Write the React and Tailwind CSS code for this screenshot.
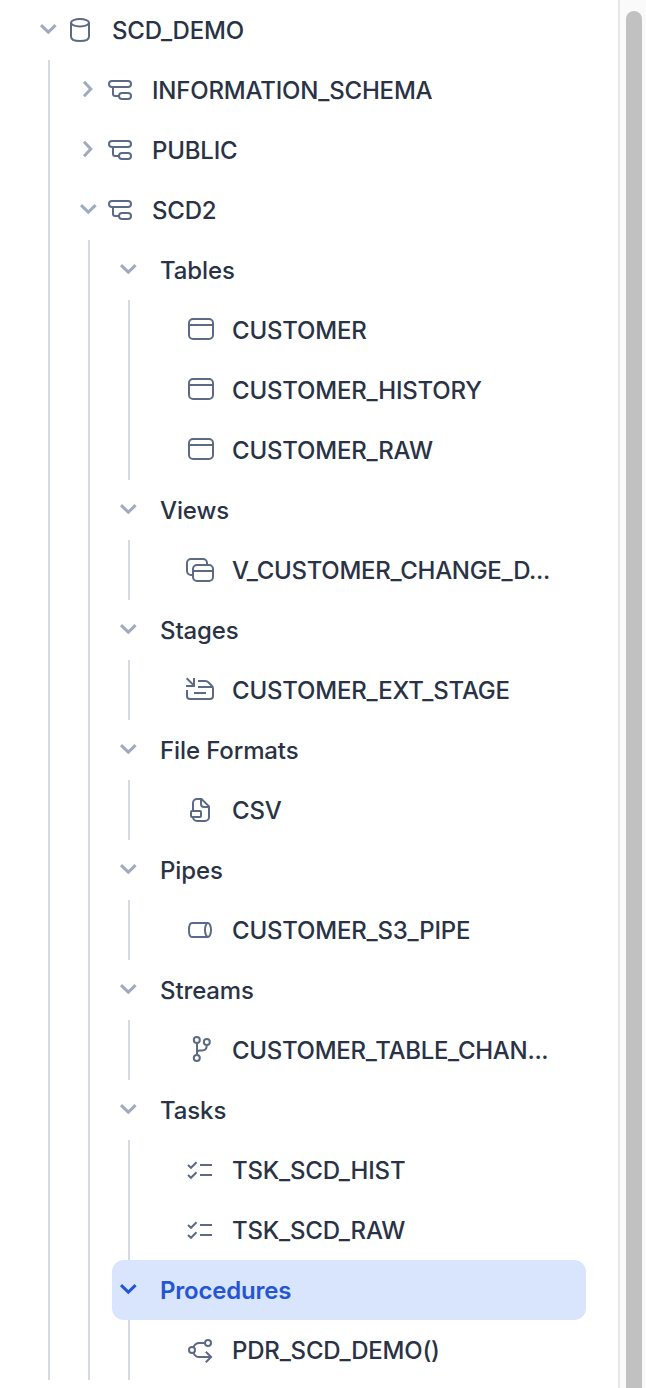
import React from 'react';

const icons = {
  database: (
    <>
      <ellipse cx="16" cy="8.7" rx="9" ry="3.7" />
      <path d="M7 8.7V22.5C7 25.4 10.5 27 16 27S25 25.4 25 22.5V8.7" />
    </>
  ),
  schema: (
    <>
      <rect x="5" y="7" width="22" height="6" rx="3" />
      <rect x="15" y="19" width="12" height="6" rx="3" />
      <path d="M9 13v7a2 2 0 0 0 2 2h4" />
    </>
  ),
  table: (
    <>
      <rect x="5" y="5" width="24" height="20" rx="4" />
      <path d="M5 11h24" />
    </>
  ),
  view: (
    <>
      <rect x="9" y="11" width="20" height="16" rx="4" />
      <path d="M9 17h20M9 21H7a4 4 0 0 1-4-4V9a4 4 0 0 1 4-4h12a4 4 0 0 1 4 4v2" />
    </>
  ),
  stage: (
    <path d="M2.7 4.3L10 11.6M10 4v8H2M14 7h7.5a4 4 0 0 1 2.8 1.2l3.5 3.5a4 4 0 0 1 1.2 2.8V22a3 3 0 0 1-3 3H6a3 3 0 0 1-3-3v-6M14 13h14.5M10 19h12" />
  ),
  file: (
    <>
      <path d="M9 17V9a4 4 0 0 1 4-4h4.5L25 12.3V23a4 4 0 0 1-4 4h-8a4 4 0 0 1-4-4M17 5v5a3 3 0 0 0 3 3h5" />
      <rect x="7" y="17" width="10" height="6" rx="1" />
    </>
  ),
  pipe: (
    <>
      <ellipse cx="24" cy="16" rx="3" ry="7" />
      <path d="M24 9H8C6 9 5 12 5 16s1 7 3 7h16" />
    </>
  ),
  stream: (
    <>
      <circle cx="12.8" cy="6" r="3" />
      <circle cx="22.8" cy="8" r="3" />
      <circle cx="12.8" cy="24" r="3" />
      <path d="M13 9v12M13 18.5c0-1.5 1-2 2.5-2H18c3 0 4.8-2 4.8-5.5" />
    </>
  ),
  task: (
    <path d="M4 11l3 2.8 5.5-5.5M4 21l3 2.8 5.5-5.5M16 11h12M16 21h12" />
  ),
  procedure: (
    <>
      <circle cx="24" cy="9" r="3" />
      <circle cx="8" cy="16" r="3" />
      <path d="M21 9h-6c-3 0-4.5 1.8-5.6 4.2M9.4 18.8C10.5 21.2 12 23 15 23h12.5M21.8 17.8l5.3 5.2-5.3 5.2" />
    </>
  ),
};

function Icon({ name }) {
  return (
    <svg viewBox="0 0 32 32" fill="none" stroke="currentColor" strokeWidth="2" className="size-8 shrink-0 text-[#5d6a85]">
      {icons[name]}
    </svg>
  );
}

function Chevron({ open, active }) {
  return (
    <svg
      viewBox="0 0 32 32"
      fill="none"
      stroke="currentColor"
      strokeWidth="3"
      className={active ? 'size-8 shrink-0 text-[#2456d3]' : 'size-8 shrink-0 text-[#a0abc0]'}
    >
      <path d={open ? 'M9 11.2l7.3 7 7.3-7' : 'M12 7.8l6.8 7.2-6.8 7.2'} />
    </svg>
  );
}

function Label({ children }) {
  return <span className="ml-4 truncate pt-0.5">{children}</span>;
}

const groups = [
  { name: 'Tables', icon: 'table', items: ['CUSTOMER', 'CUSTOMER_HISTORY', 'CUSTOMER_RAW'] },
  { name: 'Views', icon: 'view', items: ['V_CUSTOMER_CHANGE_D...'] },
  { name: 'Stages', icon: 'stage', items: ['CUSTOMER_EXT_STAGE'] },
  { name: 'File Formats', icon: 'file', items: ['CSV'] },
  { name: 'Pipes', icon: 'pipe', items: ['CUSTOMER_S3_PIPE'] },
  { name: 'Streams', icon: 'stream', items: ['CUSTOMER_TABLE_CHAN...'] },
  { name: 'Tasks', icon: 'task', items: ['TSK_SCD_HIST', 'TSK_SCD_RAW'] },
  { name: 'Procedures', icon: 'procedure', items: ['PDR_SCD_DEMO()'], active: true },
];

function SchemaRow({ name, open }) {
  return (
    <div className="flex h-15 items-center pl-[22px]">
      <Chevron open={open} />
      <Icon name="schema" />
      <Label>{name}</Label>
    </div>
  );
}

function Group({ group }) {
  return (
    <div>
      <div
        className={
          group.active
            ? 'ml-[22px] flex h-15 items-center rounded-xl bg-[#d9e5fd] font-semibold tracking-[-0.2px] text-[#2456d3]'
            : 'ml-[22px] flex h-15 items-center tracking-[-0.12px]'
        }
      >
        <Chevron open active={group.active} />
        <Label>{group.name}</Label>
      </div>
      <div className="ml-[38px] border-l-2 border-[#d5d9e4]">
        {group.items.map((item) => (
          <div
            key={item}
            className={
              item.endsWith('...')
                ? 'flex h-15 items-center pl-[54px] tracking-[-0.3px]'
                : 'flex h-15 items-center pl-[54px]'
            }
          >
            <Icon name={group.icon} />
            <Label>{item}</Label>
          </div>
        ))}
      </div>
    </div>
  );
}

export default function App() {
  return (
    <div className="flex h-[1388px] w-[646px] overflow-hidden bg-white font-['Inter',sans-serif] text-2xl font-medium tracking-[-0.2px] text-[#2a3346]">
      <div className="w-[618px] pr-8">
        <div className="flex h-15 items-center pl-8">
          <Chevron open />
          <Icon name="database" />
          <Label>SCD_DEMO</Label>
        </div>
        <div className="ml-12 border-l-2 border-[#d5d9e4]">
          <SchemaRow name="INFORMATION_SCHEMA" />
          <SchemaRow name="PUBLIC" />
          <SchemaRow name="SCD2" open />
          <div className="ml-[38px] border-l-2 border-[#d5d9e4]">
            {groups.map((group) => (
              <Group key={group.name} group={group} />
            ))}
          </div>
        </div>
      </div>
      <div className="flex w-7 border-l-2 border-[#e7e7e7] bg-[#fafafa] pt-[11px] pl-1.5">
        <div className="w-4 rounded-t-full bg-[#c1c1c1]" />
      </div>
    </div>
  );
}
